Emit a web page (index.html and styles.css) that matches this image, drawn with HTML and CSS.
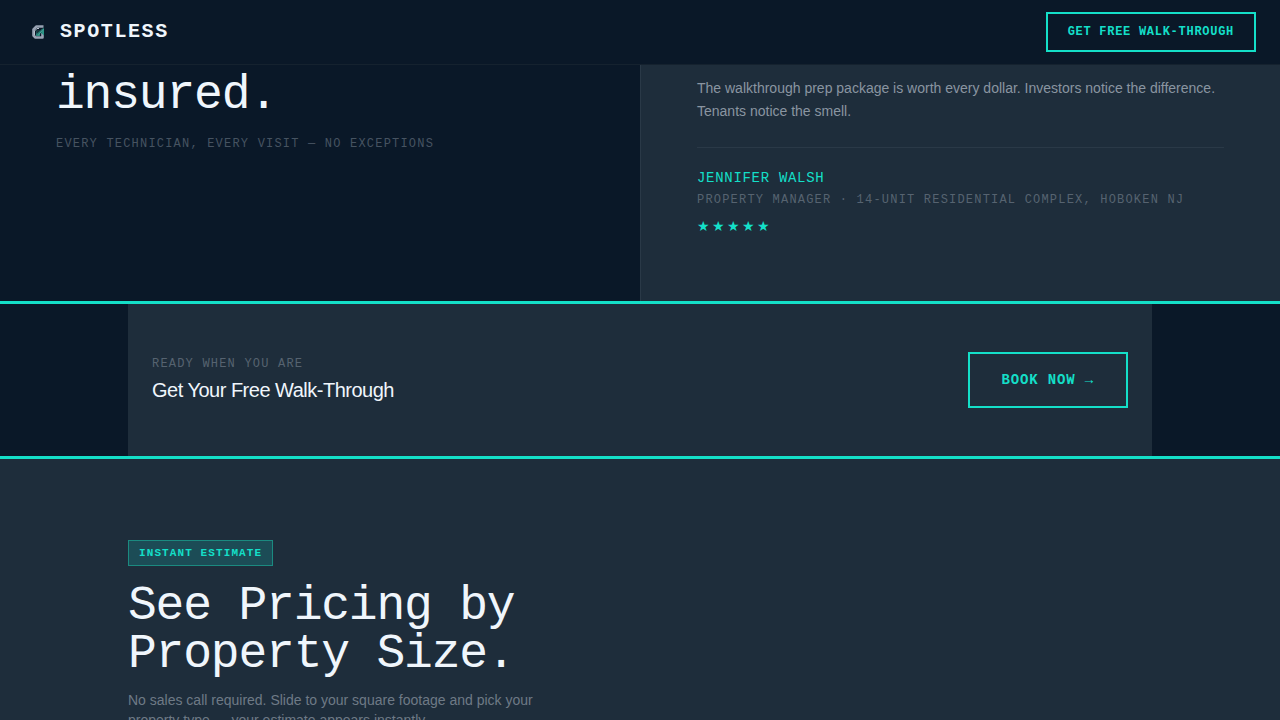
FILE: index.html
```html
<!DOCTYPE html>
<html lang="en">
<head>
<meta charset="utf-8">
<meta name="viewport" content="width=device-width, initial-scale=1">
<title>Spotless</title>
<link rel="stylesheet" href="styles.css">
</head>
<body>
<header class="nav">
  <a class="brand" href="#">
    <svg class="brand-mark" viewBox="0 0 28 28" aria-hidden="true">
      <path d="M19.500 8.500H12.500L9.500 11.500V17.500L11.500 19.500H18.500V15" fill="none" stroke="#98a2b3" stroke-width="2.600" stroke-linejoin="round"/>
      <path d="M20 9.500V17.500L17 15Z" fill="#2a9486"/>
      <path d="M20 9.500L14 14V12H12V18H16V15Z" fill="#277f78"/>
      <path d="M12 12H17L12.500 16Z" fill="#17343c"/>
      <path d="M14 17.500L19.500 11" fill="none" stroke="#4aa699" stroke-width="1"/>
      <path d="M10.500 17V13L13 10.500H15" fill="none" stroke="#b9c1cd" stroke-width="1"/>
    </svg>
    <span class="brand-name">SPOTLESS</span>
  </a>
  <button class="btn btn-small" type="button">GET FREE WALK-THROUGH</button>
</header>
<main>
  <section class="proof">
    <div class="proof-claim">
      <h2 class="display">insured.</h2>
      <p class="label">EVERY TECHNICIAN, EVERY VISIT — NO EXCEPTIONS</p>
    </div>
    <article class="review">
      <p class="review-text">The walkthrough prep package is worth every dollar. Investors notice the difference. Tenants notice the smell.</p>
      <footer class="review-by">
        <p class="review-name">JENNIFER WALSH</p>
        <p class="label">PROPERTY MANAGER · 14-UNIT RESIDENTIAL COMPLEX, HOBOKEN NJ</p>
        <p class="stars" role="img" aria-label="5 out of 5 stars">★★★★★</p>
      </footer>
    </article>
  </section>
  <section class="cta">
    <div class="cta-inner">
      <div class="cta-copy">
        <p class="label">READY WHEN YOU ARE</p>
        <h2 class="cta-title">Get Your Free Walk-Through</h2>
      </div>
      <button class="btn btn-large" type="button">BOOK NOW →</button>
    </div>
  </section>
  <section class="pricing">
    <div class="pricing-inner">
      <span class="badge">INSTANT ESTIMATE</span>
      <h2 class="display">See Pricing by Property Size.</h2>
      <p class="pricing-text">No sales call required. Slide to your square footage and pick your property type — your estimate appears instantly.</p>
    </div>
  </section>
</main>
</body>
</html>
```

FILE: styles.css
```css
:root {
  --ink: #0a1828;
  --panel: #1e2d3b;
  --accent: #14dfc8;
  --text: #f0f6fc;
  --line: #2a3947;
  --mono: "Liberation Mono", "Courier New", monospace;
  --sans: "Liberation Sans", Arial, sans-serif;
}

* {
  box-sizing: border-box;
}

body {
  margin: 0;
  background: var(--panel);
  color: var(--text);
  font-family: var(--sans);
}

h2,
p {
  margin: 0;
  font-weight: 400;
}

.nav {
  position: sticky;
  top: 0;
  z-index: 1;
  display: flex;
  align-items: center;
  justify-content: space-between;
  padding: 12px 24px;
  background: var(--ink);
  border-bottom: 1px solid #15222f;
}

.brand {
  display: flex;
  align-items: center;
  gap: 8px;
  color: var(--text);
  text-decoration: none;
}

.brand-mark {
  width: 28px;
  height: 28px;
}

.brand-name {
  font: 700 20px/28px var(--mono);
  letter-spacing: 0.08em;
}

.btn {
  background: transparent;
  border: 2px solid var(--accent);
  color: var(--accent);
  font-family: var(--mono);
  font-weight: 700;
  letter-spacing: 0.06em;
  cursor: pointer;
}

.btn-small {
  height: 40px;
  padding: 0 20px;
  font-size: 12px;
}

.btn-large {
  height: 56px;
  padding: 0 32px;
  font-size: 14px;
}

.proof {
  display: grid;
  grid-template-columns: 1fr 1fr;
}

.proof-claim {
  padding: 6px 56px 56px;
  background: var(--ink);
}

.proof-claim .label {
  margin-top: 15px;
  color: #465361;
}

.display {
  font: 400 48px/48px var(--mono);
  letter-spacing: -0.025em;
}

.label {
  font: 400 12px/20px var(--mono);
  letter-spacing: 0.1em;
  color: #566370;
}

.review {
  padding: 12px 56px 66px;
  border-left: 1px solid var(--line);
}

.review-text {
  font-size: 14px;
  line-height: 23px;
  color: #8a95a1;
}

.review-by {
  margin-top: 24px;
  padding-top: 20px;
  border-top: 1px solid var(--line);
}

.review-by .label {
  margin-top: 2px;
}

.review-name {
  font: 400 14px/20px var(--mono);
  letter-spacing: 0.05em;
  color: var(--accent);
}

.stars {
  margin-top: 7px;
  font-size: 14px;
  line-height: 18px;
  letter-spacing: 2px;
  color: var(--accent);
}

.cta {
  background: var(--ink);
  border-top: 3px solid var(--accent);
  border-bottom: 3px solid var(--accent);
}

.cta-inner {
  display: flex;
  align-items: center;
  justify-content: space-between;
  max-width: 1024px;
  margin: 0 auto;
  padding: 48px 24px;
  background: var(--panel);
}

.cta-copy {
  padding-bottom: 2px;
}

.cta-title {
  margin-top: 2px;
  font-size: 20px;
  line-height: 28px;
  letter-spacing: -0.025em;
}

.pricing-inner {
  max-width: 1024px;
  margin: 0 auto;
  padding: 81px 0 80px;
}

.badge {
  display: inline-block;
  padding: 4px 10px;
  border: 1px solid #1b8a80;
  background: #1c4c56;
  color: var(--accent);
  font: 700 11px/16px var(--mono);
  letter-spacing: 0.1em;
}

.pricing .display {
  max-width: 448px;
  margin-top: 16px;
}

.pricing-text {
  max-width: 448px;
  margin-top: 12px;
  font-size: 14px;
  line-height: 20px;
  color: #6e7a86;
}
```
